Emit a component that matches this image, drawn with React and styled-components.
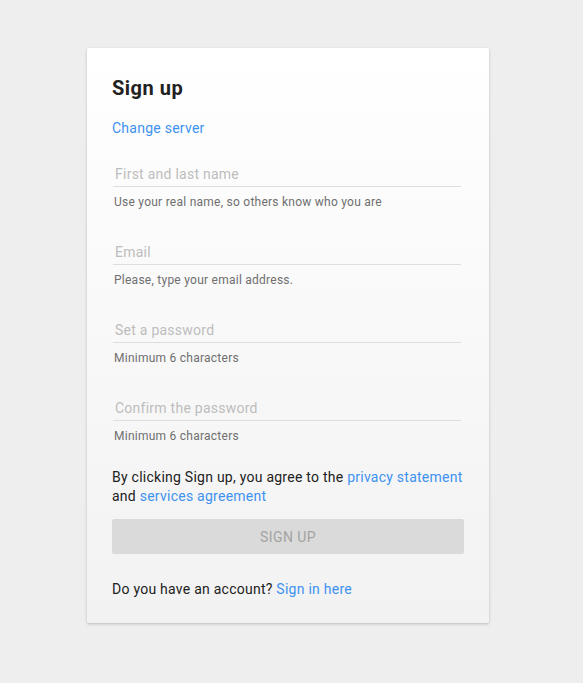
import React from "react";
import styled, { createGlobalStyle } from "styled-components";

const GlobalStyle = createGlobalStyle`
  html, body {
    margin: 0;
    padding: 0;
    background: #eeeeee;
    font-family: Roboto, "Liberation Sans", Arial, sans-serif;
  }
  * {
    box-sizing: border-box;
  }
`;

const Page = styled.div`
  padding: 48px 0 0 87px;
  min-height: 683px;
`;

const Card = styled.div`
  width: 402px;
  padding: 28px 25px 24px 25px;
  background: linear-gradient(180deg, #ffffff 0%, #f2f2f2 100%);
  border-radius: 2px;
  box-shadow: 0 1px 3px rgba(0, 0, 0, 0.22);
  display: flex;
  flex-direction: column;
  letter-spacing: 0.25px;
`;

const Title = styled.h1`
  margin: 0;
  font-size: 20px;
  line-height: 24px;
  font-weight: 700;
  letter-spacing: 0.5px;
  color: #212121;
`;

const Link = styled.a`
  color: #3e92f0;
  text-decoration: none;
  cursor: pointer;
`;

const ServerLink = styled(Link)`
  display: block;
  margin-top: 18px;
  font-size: 14px;
  line-height: 20px;
`;

const Fields = styled.div`
  display: flex;
  flex-direction: column;
  gap: 30px;
  margin-top: 24px;
`;

const Field = styled.div`
  display: flex;
  flex-direction: column;
  padding: 0 3px 0 1px;
`;

const Input = styled.input`
  height: 25px;
  padding: 0 2px;
  border: none;
  border-bottom: 1px solid #dedede;
  background: transparent;
  font-family: inherit;
  font-size: 14px;
  letter-spacing: 0.25px;
  color: #212121;
  outline: none;

  &::placeholder {
    color: #bdbdbd;
  }
`;

const Helper = styled.div`
  margin-top: 7px;
  padding-left: 1px;
  font-size: 12px;
  line-height: 16px;
  color: #6f6f6f;
`;

const Terms = styled.p`
  margin: 24px 0 0;
  font-size: 14px;
  line-height: 19px;
  color: #212121;
`;

const Button = styled.button`
  margin-top: 13px;
  height: 35px;
  width: 100%;
  border: none;
  border-radius: 2px;
  background: #dadada;
  color: #a3a3a3;
  font-family: inherit;
  font-size: 14px;
  letter-spacing: 0.4px;
  text-transform: uppercase;
  cursor: default;
`;

const Footer = styled.p`
  margin: 25px 0 0;
  font-size: 14px;
  line-height: 20px;
  color: #212121;
`;

const fields = [
  { placeholder: "First and last name", hint: "Use your real name, so others know who you are", type: "text" },
  { placeholder: "Email", hint: "Please, type your email address.", type: "email" },
  { placeholder: "Set a password", hint: "Minimum 6 characters", type: "password" },
  { placeholder: "Confirm the password", hint: "Minimum 6 characters", type: "password" },
];

export default function App() {
  return (
    <Page>
      <GlobalStyle />
      <Card>
        <Title>Sign up</Title>
        <ServerLink>Change server</ServerLink>
        <Fields>
          {fields.map((f) => (
            <Field key={f.placeholder}>
              <Input type={f.type} placeholder={f.placeholder} />
              <Helper>{f.hint}</Helper>
            </Field>
          ))}
        </Fields>
        <Terms>
          By clicking Sign up, you agree to the <Link>privacy statement</Link>
          <br />
          and <Link>services agreement</Link>
        </Terms>
        <Button disabled>Sign up</Button>
        <Footer>
          Do you have an account? <Link>Sign in here</Link>
        </Footer>
      </Card>
    </Page>
  );
}
